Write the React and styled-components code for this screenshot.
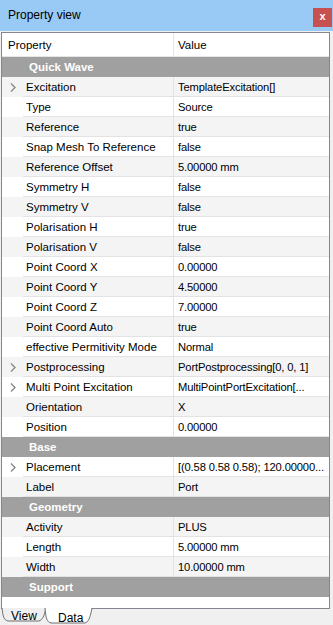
import React from 'react';
import styled, { createGlobalStyle } from 'styled-components';

const GlobalStyle = createGlobalStyle`
    html, body {
        margin: 0;
        padding: 0;
        background: #f0f0f0;
    }
    body {
        font-family: 'Liberation Sans', Arial, sans-serif;
        color: #000;
    }
`;

const groups = [
    {
        name: 'Quick Wave',
        items: [
            ['Excitation', 'TemplateExcitation[]', true],
            ['Type', 'Source'],
            ['Reference', 'true'],
            ['Snap Mesh To Reference', 'false'],
            ['Reference Offset', '5.00000 mm'],
            ['Symmetry H', 'false'],
            ['Symmetry V', 'false'],
            ['Polarisation H', 'true'],
            ['Polarisation V', 'false'],
            ['Point Coord X', '0.00000'],
            ['Point Coord Y', '4.50000'],
            ['Point Coord Z', '7.00000'],
            ['Point Coord Auto', 'true'],
            ['effective Permitivity Mode', 'Normal'],
            ['Postprocessing', 'PortPostprocessing[0, 0, 1]', true],
            ['Multi Point Excitation', 'MultiPointPortExcitation[...', true],
            ['Orientation', 'X'],
            ['Position', '0.00000'],
        ],
    },
    {
        name: 'Base',
        items: [
            ['Placement', '[(0.58 0.58 0.58); 120.00000...', true],
            ['Label', 'Port'],
        ],
    },
    {
        name: 'Geometry',
        items: [
            ['Activity', 'PLUS'],
            ['Length', '5.00000 mm'],
            ['Width', '10.00000 mm'],
        ],
    },
    { name: 'Support', items: [] },
];

function Chevron() {
    return (
        <svg width="6" height="9" viewBox="0 0 6 9">
            <path d="M1 0.5 L5 4.5 L1 8.5" fill="none" stroke="#8a8a8a" strokeWidth="1.4" />
        </svg>
    );
}

function Tab({ label, selected, width }) {
    const h = selected ? 15 : 13;
    const w = width;
    return (
        <TabItem selected={selected} style={{ width: w }}>
            <svg width={w} height="17" viewBox={`0 0 ${w} 17`}>
                <path
                    d={`M1 0 C2 ${h - 4} 3 ${h - 1} 7 ${h} L${w - 8} ${h} C${w - 5} ${h - 1} ${w - 3} ${h - 4} ${w - 1} 0`}
                    fill={selected ? '#ffffff' : '#f0f0f0'}
                    stroke="#6e6e6e"
                    strokeWidth="1"
                />
            </svg>
            <TabLabel selected={selected}>{label}</TabLabel>
        </TabItem>
    );
}

export default function App() {
    let visual = 0;
    const rows = [];
    groups.forEach((g) => {
        rows.push(
            <GroupRow key={g.name}>
                <span>{g.name}</span>
            </GroupRow>
        );
        visual++;
        g.items.forEach(([k, v, expandable]) => {
            rows.push(
                <Row key={g.name + k} alt={visual % 2 === 1}>
                    <Branch>{expandable && <Chevron />}</Branch>
                    <KeyCell>{k}</KeyCell>
                    <ValueCell>{v}</ValueCell>
                </Row>
            );
            visual++;
        });
    });

    return (
        <Window>
            <GlobalStyle />
            <TitleBar>
                <Title>Property view</Title>
                <CloseButton>x</CloseButton>
            </TitleBar>
            <Frame>
                <Header>
                    <HeaderCell>Property</HeaderCell>
                    <HeaderCell value>Value</HeaderCell>
                </Header>
                {rows}
            </Frame>
            <TabBar>
                <Tab label="View" width={46} />
                <Tab label="Data" width={49} selected />
            </TabBar>
        </Window>
    );
}

const Window = styled.div`
    width: 333px;
    height: 625px;
    display: flex;
    flex-direction: column;
    background: #f0f0f0;
    overflow: hidden;
`;

const TitleBar = styled.div`
    height: 31px;
    flex: none;
    background: #99c9f5;
    display: flex;
    align-items: flex-start;
    justify-content: space-between;
`;

const Title = styled.div`
    font-size: 12px;
    padding: 8px 0 0 8px;
    line-height: 15px;
`;

const CloseButton = styled.div`
    margin: 8px 1px 0 0;
    width: 19px;
    height: 19px;
    background: #c75050;
    color: #fff;
    font-weight: bold;
    font-size: 11px;
    line-height: 17px;
    text-align: center;
`;

const Frame = styled.div`
    flex: none;
    height: 575px;
    margin: 1px 3px 0 1px;
    border: 1px solid #828790;
    background: #fff;
    display: flex;
    flex-direction: column;
    overflow: hidden;
`;

const Header = styled.div`
    height: 24px;
    flex: none;
    display: grid;
    grid-template-columns: 171px 1fr;
    font-size: 11.5px;
`;

const HeaderCell = styled.div`
    display: flex;
    align-items: center;
    padding-left: ${(p) => (p.value ? '4px' : '6px')};
    border-left: ${(p) => (p.value ? '1px solid #e5e5e5' : 'none')};
    border-bottom: 1px solid #e5e5e5;
`;

const GroupRow = styled.div`
    height: 20px;
    flex: none;
    background: #a0a0a0;
    color: #fff;
    font-weight: bold;
    font-size: 11.5px;
    display: flex;
    align-items: center;
    padding-left: 27px;
    box-sizing: border-box;
`;

const Row = styled.div`
    height: 20px;
    flex: none;
    display: grid;
    grid-template-columns: 21px 150px 1fr;
    background: ${(p) => (p.alt ? '#f4f4f4' : '#ffffff')};
    font-size: 11.5px;
`;

const Branch = styled.div`
    display: flex;
    align-items: center;
    padding-left: 8px;
`;

const KeyCell = styled.div`
    display: flex;
    align-items: center;
    padding-left: 3px;
    border-bottom: 1px solid #e3e3e3;
    white-space: nowrap;
    overflow: hidden;
`;

const ValueCell = styled.div`
    display: flex;
    align-items: center;
    padding-left: 4px;
    border-left: 1px solid #e3e3e3;
    border-bottom: 1px solid #e3e3e3;
    white-space: nowrap;
    overflow: hidden;
    font-size: 11.2px;
    letter-spacing: -0.15px;
`;

const TabBar = styled.div`
    flex: none;
    height: 17px;
    display: flex;
    padding-left: 1px;
    margin-top: -1px;
`;

const TabItem = styled.div`
    position: relative;
    height: 17px;
    margin-right: -3px;
    z-index: ${(p) => (p.selected ? 2 : 1)};

    svg {
        position: absolute;
        left: 0;
        top: 0;
    }
`;

const TabLabel = styled.span`
    position: relative;
    display: block;
    font-size: 12px;
    line-height: 14px;
    padding: ${(p) => (p.selected ? '3px 0 0 14px' : '1px 0 0 10px')};
`;
